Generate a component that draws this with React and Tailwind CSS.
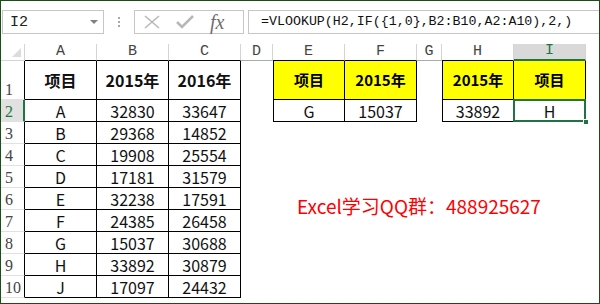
import React from 'react';

const rows = [
  ['A', '32830', '33647'],
  ['B', '29368', '14852'],
  ['C', '19908', '25554'],
  ['D', '17181', '31579'],
  ['E', '32238', '17591'],
  ['F', '24385', '26458'],
  ['G', '15037', '30688'],
  ['H', '33892', '30879'],
  ['J', '17097', '24432'],
];

const cjk = "font-['Noto_Sans_CJK_SC','Noto_Sans',sans-serif]";
const headCell = "flex items-center justify-center border-r border-[#d4d4d4] font-['Liberation_Mono',monospace] text-[15px] text-[#444]";
const dataCell = `flex items-center justify-center border-r border-b border-black text-[16px] text-[#111] ${cjk}`;
const titleCell = `flex items-center justify-center border-r border-b border-black bg-[#ffff00] text-[15px] font-bold text-black ${cjk}`;

/**
 * Excel window: formula bar on top, then the sheet with three small tables.
 */
const App = () => {
  const rowHeader = (n, active) => (
    <div
      key={`rh${n}`}
      className={`flex items-end pl-[4px] pb-[1px] border-b border-[#e1e1e1] font-['Liberation_Serif',serif] text-[16px] leading-none ${
        active
          ? 'bg-[#e1e1e1] text-[#217346] border-r-2 border-r-[#217346]'
          : 'bg-white text-[#444] border-r border-r-black'
      }`}
    >
      {n}
    </div>
  );

  return (
    <div className="relative w-[600px] h-[304px] overflow-hidden bg-white border border-[#1b4d1b]">
      {/* Formula bar */}
      <div className="flex items-stretch h-[24px] mt-[9px]">
        <div className="flex items-center justify-between ml-[1px] w-[102px] border border-[#c6c6c6] pl-[7px] pr-[5px]">
          <span className="font-['Liberation_Mono',monospace] text-[15px] text-[#222] leading-none">I2</span>
          <span className="w-0 h-0 border-x-[4px] border-x-transparent border-t-[4px] border-t-[#808080]" />
        </div>
        <div className="flex w-[30px] flex-col items-center justify-center gap-[2px]">
          <span className="w-[2px] h-[2px] bg-[#a8a8a8]" />
          <span className="w-[2px] h-[2px] bg-[#a8a8a8]" />
          <span className="w-[2px] h-[2px] bg-[#a8a8a8]" />
        </div>
        <div className="flex items-center w-[110px] border border-[#c6c6c6] pl-[8px]">
          <svg width="18" height="16" viewBox="0 0 18 16" className="mr-[15px]">
            <path d="M2 2 L16 14 M16 2 L2 14" stroke="#b8b8b8" strokeWidth="1.6" fill="none" />
          </svg>
          <svg width="18" height="16" viewBox="0 0 18 16" className="mr-[16px]">
            <path d="M1 8 L6 13 L17 2" stroke="#b8b8b8" strokeWidth="2.6" fill="none" />
          </svg>
          <span className="font-['Liberation_Serif',serif] italic text-[20px] leading-none text-[#6e6e6e]">fx</span>
        </div>
        <div className="flex items-center flex-1 ml-[4px] border border-r-0 border-[#c6c6c6] pl-[12px]">
          <span className="font-['Liberation_Mono',monospace] text-[13.3px] leading-none text-[#111] whitespace-nowrap">
            =VLOOKUP(H2,IF({'{'}1,0{'}'},B2:B10,A2:A10),2,)
          </span>
        </div>
      </div>

      {/* Sheet */}
      <div className="grid mt-[10px] grid-cols-[24px_72px_72px_72px_32px_72px_72px_25px_72px_72px_1fr] grid-rows-[17px_39px_repeat(9,22px)]">
        {/* column headers */}
        <div className="relative border-r border-b border-[#d4d4d4]">
          <span className="absolute right-[3px] bottom-[3px] w-0 h-0 border-l-[9px] border-l-transparent border-b-[9px] border-b-[#dcdcdc]" />
        </div>
        <div className={`${headCell} border-b border-b-black`}>A</div>
        <div className={`${headCell} border-b border-b-black`}>B</div>
        <div className={`${headCell} border-b border-b-black`}>C</div>
        <div className={`${headCell} border-b border-b-[#ababab]`}>D</div>
        <div className={`${headCell} border-b border-b-black`}>E</div>
        <div className={`${headCell} border-b border-b-black`}>F</div>
        <div className={`${headCell} border-b border-b-[#ababab]`}>G</div>
        <div className={`${headCell} border-b border-b-black`}>H</div>
        <div className={`${headCell} bg-[#d9d9d9] text-[#217346] border-b-2 border-b-[#217346]`}>I</div>
        <div />

        {/* row 1 */}
        {rowHeader(1, false)}
        <div className={`${dataCell} font-bold text-[15px]`}>项目</div>
        <div className={`${dataCell} font-bold text-[15px]`}>2015年</div>
        <div className={`${dataCell} font-bold text-[15px]`}>2016年</div>
        <div />
        <div className={`${titleCell} border-l`}>项目</div>
        <div className={titleCell}>2015年</div>
        <div />
        <div className={`${titleCell} border-l`}>2015年</div>
        <div className={titleCell}>项目</div>
        <div />

        {rows.map((r, i) => {
          const n = i + 2;
          return (
            <React.Fragment key={n}>
              {rowHeader(n, n === 2)}
              <div className={dataCell}>{r[0]}</div>
              <div className={dataCell}>{r[1]}</div>
              <div className={dataCell}>{r[2]}</div>
              <div />
              {n === 2 ? (
                <>
                  <div className={`${dataCell} border-l`}>G</div>
                  <div className={dataCell}>15037</div>
                  <div />
                  <div className={`${dataCell} border-l`}>33892</div>
                  <div className={`${dataCell} relative`}>
                    H
                    <span className="absolute -left-[1px] -top-[1px] -right-[1px] -bottom-[1px] border-2 border-[#217346]" />
                    <span className="absolute -right-[4px] -bottom-[4px] w-[6px] h-[6px] bg-[#217346] border border-white" />
                  </div>
                </>
              ) : (
                <>
                  <div />
                  <div />
                  <div />
                  <div />
                  <div />
                </>
              )}
              <div />
            </React.Fragment>
          );
        })}
      </div>

      {/* floating text box */}
      <div className={`absolute left-[296px] top-[195px] text-[19px] leading-[19px] text-[#ff0000] whitespace-nowrap ${cjk}`}>
        Excel学习QQ群：488925627
      </div>
    </div>
  );
};

export default App;
